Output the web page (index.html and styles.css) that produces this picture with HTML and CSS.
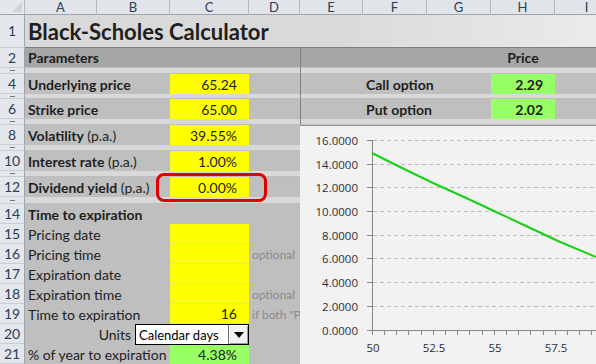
FILE: index.html
```html
<!DOCTYPE html>
<html>
<head>
<meta charset="utf-8">
<link rel="stylesheet" href="styles.css">
</head>
<body>
<div class="sheet">
  <div class="corner"><span class="corner-tri"></span></div>
  <div class="ch">A</div><div class="ch">B</div><div class="ch">C</div><div class="ch">D</div><div class="ch">E</div><div class="ch">F</div><div class="ch">G</div><div class="ch">H</div><div class="ch">I</div>

  <div class="rh">1</div>
  <div class="c title span9">Black-Scholes Calculator</div>

  <div class="rh">2</div>
  <div class="c sec span4 lab">Parameters</div>
  <div class="c sec edge span3"></div>
  <div class="c sec center">Price</div>
  <div class="c sec"></div>

  <div class="rh sp"></div>
  <div class="c gap span4"></div>
  <div class="c gap edge span5"></div>

  <div class="rh">4</div>
  <div class="c g span2 lab"><b>Underlying price</b></div>
  <div class="c yellow num">65.24</div>
  <div class="c g"></div>
  <div class="c g edge"></div>
  <div class="c g span2 lab"><b>Call option</b></div>
  <div class="c green num"><b>2.29</b></div>
  <div class="c g"></div>

  <div class="rh sp"></div>
  <div class="c gap span4"></div>
  <div class="c gap edge span5"></div>

  <div class="rh">6</div>
  <div class="c g span2 lab"><b>Strike price</b></div>
  <div class="c yellow num">65.00</div>
  <div class="c g"></div>
  <div class="c g edge"></div>
  <div class="c g span2 lab"><b>Put option</b></div>
  <div class="c green num"><b>2.02</b></div>
  <div class="c g"></div>

  <div class="rh sp"></div>
  <div class="c gap span4"></div>
  <div class="c gap edge span5"></div>

  <div class="chart">
    <svg width="296" height="239" viewBox="0 0 296 239" class="plot">
      <g stroke="#bdbdbd" stroke-width="1" stroke-dasharray="4 3">
        <line x1="73" y1="14.5" x2="296" y2="14.5"/>
        <line x1="73" y1="38.5" x2="296" y2="38.5"/>
        <line x1="73" y1="61.5" x2="296" y2="61.5"/>
        <line x1="73" y1="85.5" x2="296" y2="85.5"/>
        <line x1="73" y1="109.5" x2="296" y2="109.5"/>
        <line x1="73" y1="132.5" x2="296" y2="132.5"/>
        <line x1="73" y1="156.5" x2="296" y2="156.5"/>
        <line x1="73" y1="180.5" x2="296" y2="180.5"/>
      </g>
      <g stroke="#868686" stroke-width="1">
        <line x1="72.5" y1="14" x2="72.5" y2="204"/>
        <line x1="72" y1="204.5" x2="296" y2="204.5"/>
        <line x1="67" y1="14.5" x2="72" y2="14.5"/>
        <line x1="67" y1="38.5" x2="72" y2="38.5"/>
        <line x1="67" y1="61.5" x2="72" y2="61.5"/>
        <line x1="67" y1="85.5" x2="72" y2="85.5"/>
        <line x1="67" y1="109.5" x2="72" y2="109.5"/>
        <line x1="67" y1="132.5" x2="72" y2="132.5"/>
        <line x1="67" y1="156.5" x2="72" y2="156.5"/>
        <line x1="67" y1="180.5" x2="72" y2="180.5"/>
        <line x1="67" y1="204.5" x2="72" y2="204.5"/>
        <line x1="72.5" y1="204" x2="72.5" y2="209"/>
        <line x1="84.5" y1="204" x2="84.5" y2="209"/>
        <line x1="96.5" y1="204" x2="96.5" y2="209"/>
        <line x1="108.5" y1="204" x2="108.5" y2="209"/>
        <line x1="121.5" y1="204" x2="121.5" y2="209"/>
        <line x1="133.5" y1="204" x2="133.5" y2="209"/>
        <line x1="145.5" y1="204" x2="145.5" y2="209"/>
        <line x1="157.5" y1="204" x2="157.5" y2="209"/>
        <line x1="169.5" y1="204" x2="169.5" y2="209"/>
        <line x1="182.5" y1="204" x2="182.5" y2="209"/>
        <line x1="194.5" y1="204" x2="194.5" y2="209"/>
        <line x1="206.5" y1="204" x2="206.5" y2="209"/>
        <line x1="218.5" y1="204" x2="218.5" y2="209"/>
        <line x1="230.5" y1="204" x2="230.5" y2="209"/>
        <line x1="243.5" y1="204" x2="243.5" y2="209"/>
        <line x1="255.5" y1="204" x2="255.5" y2="209"/>
        <line x1="267.5" y1="204" x2="267.5" y2="209"/>
        <line x1="279.5" y1="204" x2="279.5" y2="209"/>
        <line x1="291.5" y1="204" x2="291.5" y2="209"/>
      </g>
      <g class="ylab" text-anchor="end">
        <text x="58" y="18.5">16.0000</text>
        <text x="58" y="42.5">14.0000</text>
        <text x="58" y="65.5">12.0000</text>
        <text x="58" y="89.5">10.0000</text>
        <text x="58" y="113.5">8.0000</text>
        <text x="58" y="136.5">6.0000</text>
        <text x="58" y="160.5">4.0000</text>
        <text x="58" y="184.5">2.0000</text>
        <text x="58" y="208.5">0.0000</text>
      </g>
      <g class="xlab" text-anchor="middle">
        <text x="73" y="226">50</text>
        <text x="134" y="226">52.5</text>
        <text x="195" y="226">55</text>
        <text x="256" y="226">57.5</text>
      </g>
      <polyline fill="none" stroke="#17d017" stroke-width="2" points="72,27 102,42 133,57 164,71 194,85 226,100 258,115 296,131"/>
    </svg>
  </div>

  <div class="rh">8</div>
  <div class="c g span2 lab"><b>Volatility</b>&nbsp;(p.a.)</div>
  <div class="c yellow num">39.55%</div>
  <div class="c g"></div>

  <div class="rh sp"></div>
  <div class="c gap span4"></div>

  <div class="rh">10</div>
  <div class="c g span2 lab"><b>Interest rate</b>&nbsp;(p.a.)</div>
  <div class="c yellow num">1.00%</div>
  <div class="c g"></div>

  <div class="rh sp"></div>
  <div class="c gap span4"></div>

  <div class="rh">12</div>
  <div class="c g span2 lab"><b>Dividend yield</b>&nbsp;(p.a.)</div>
  <div class="c yellow num">0.00%</div>
  <div class="c g"></div>

  <div class="rh sp"></div>
  <div class="c gap span4"></div>

  <div class="rh">14</div>
  <div class="c g span4 lab"><b>Time to expiration</b></div>

  <div class="rh">15</div>
  <div class="c g span2 lab">Pricing date</div>
  <div class="c yellow ln"></div>
  <div class="c g"></div>

  <div class="rh">16</div>
  <div class="c g span2 lab">Pricing time</div>
  <div class="c yellow ln"></div>
  <div class="c g note">optional</div>

  <div class="rh">17</div>
  <div class="c g span2 lab">Expiration date</div>
  <div class="c yellow ln"></div>
  <div class="c g"></div>

  <div class="rh">18</div>
  <div class="c g span2 lab">Expiration time</div>
  <div class="c yellow ln"></div>
  <div class="c g note">optional</div>

  <div class="rh">19</div>
  <div class="c g span2 lab">Time to expiration</div>
  <div class="c yellow ln num">16</div>
  <div class="c g note">if both "Pr</div>

  <div class="rh">20</div>
  <div class="c g span3 units-row">
    <span class="units">Units</span>
    <div class="combo">
      <span class="combo-text">Calendar days</span>
      <span class="combo-btn"><span class="tri"></span></span>
    </div>
  </div>
  <div class="c g"></div>

  <div class="rh">21</div>
  <div class="c g span2 lab">% of year to expiration</div>
  <div class="c green2 num">4.38%</div>
  <div class="c g"></div>

  <div class="ring"></div>
</div>
</body>
</html>
```
FILE: styles.css
```css
* { box-sizing: border-box; }
html, body { margin: 0; padding: 0; }
body {
  width: 596px;
  height: 364px;
  overflow: hidden;
  background: #fff;
  font-family: Lato, "Open Sans", sans-serif;
}
.sheet {
  position: relative;
  display: grid;
  grid-template-columns: 25px 72px 73px 79px 51px 63px 64px 64px 64px 64px;
  grid-template-rows: 15px 33px 20px 6px 20px 5px 20px 6px 20px 6px 20px 6px 20px 7px 20px repeat(7, 20px);
  width: 596px;
  height: 364px;
  overflow: hidden;
}
.corner {
  position: relative;
  background: #e4e8ed;
  border-right: 1px solid #b5bac1;
  border-bottom: 1px solid #9ea4ab;
}
.corner-tri {
  position: absolute;
  right: 2px;
  bottom: 2px;
  width: 0;
  height: 0;
  border-left: 10px solid transparent;
  border-bottom: 10px solid #d0d4da;
}
.ch {
  background: #e1e5ea;
  border-right: 1px solid #b5bac1;
  border-bottom: 1px solid #9ea4ab;
  color: #2b3e57;
  font-size: 13px;
  display: flex;
  align-items: center;
  justify-content: center;
  line-height: 1;
}
.rh {
  background: #e4e8ed;
  border-right: 1px solid #9ea4ab;
  border-bottom: 1px solid #c8cdd3;
  color: #2b3e57;
  font-size: 14px;
  display: flex;
  align-items: center;
  justify-content: center;
  overflow: hidden;
  line-height: 1;
}
.rh.sp {
  position: relative;
}
.rh.sp::after {
  content: "";
  width: 5px;
  height: 1px;
  background: #6a7a8e;
}
.c {
  display: flex;
  align-items: center;
  white-space: nowrap;
  overflow: hidden;
  font-size: 14px;
  color: #1e1e1e;
  min-width: 0;
}
.span2 { grid-column: span 2; }
.span3 { grid-column: span 3; }
.span4 { grid-column: span 4; }
.span5 { grid-column: span 5; }
.span9 { grid-column: span 9; }
.lab { padding-left: 3px; }
.title {
  font-size: 22px;
  font-weight: 700;
  padding-left: 3px;
  padding-top: 1px;
  background: linear-gradient(to right, #d9d9d9 0%, #d9d9d9 50%, #ececec 100%);
  border-bottom: 1px solid #7f7f7f;
}
.sec {
  background: #a6a6a6;
  font-weight: 700;
  border-bottom: 1px solid #bcbcbc;
}
.center { justify-content: center; }
.edge { border-left: 1px solid #808080; }
.gap {
  background: #d9d9d9;
  border-bottom: 1px solid #bdbdbd;
}
.g { background: #bfbfbf; }
.yellow {
  background: #ffff00;
}
.yellow.ln {
  border-bottom: 1px solid #e1e1a0;
}
.green {
  background: #99ff66;
}
.green2 {
  background: #99ff66;
}
.num {
  justify-content: flex-end;
  padding-right: 12px;
}
.note {
  font-size: 12px;
  color: #8a8a8a;
  padding-left: 3px;
}
.units-row {
  justify-content: flex-end;
  overflow: visible;
  align-items: flex-start;
  position: relative;
  z-index: 2;
}
.units {
  margin-top: 2px;
  margin-right: 4px;
}
.combo {
  width: 114px;
  height: 21px;
  background: #fff;
  border: 1px solid #000;
  display: flex;
  align-items: stretch;
}
.combo-text {
  flex: 1;
  font-size: 13px;
  padding-left: 3px;
  display: flex;
  align-items: center;
  color: #000;
}
.combo-btn {
  width: 20px;
  background: #f0f0f0;
  border-left: 1px solid #6d6d6d;
  box-shadow: inset 1px 1px 0 #fff, inset -1px -1px 0 #9a9a9a;
  display: flex;
  align-items: center;
  justify-content: center;
}
.tri {
  width: 0;
  height: 0;
  border-left: 5px solid transparent;
  border-right: 5px solid transparent;
  border-top: 6px solid #000;
}
.chart {
  grid-column: 6 / 11;
  grid-row: 9 / 23;
  background: #f2f2f2;
  border-left: 1px solid #8a8a8a;
  border-top: 1px solid #9a9a9a;
  overflow: hidden;
  margin-left: -1px;
}
.plot { display: block; }
.ylab text, .xlab text {
  font-family: "Open Sans", sans-serif;
  font-size: 11.5px;
  fill: #2e2e2e;
}
.ring {
  position: absolute;
  left: 156px;
  top: 173px;
  width: 111px;
  height: 29px;
  border: 3px solid #e00000;
  border-radius: 8px;
  z-index: 3;
}
```
